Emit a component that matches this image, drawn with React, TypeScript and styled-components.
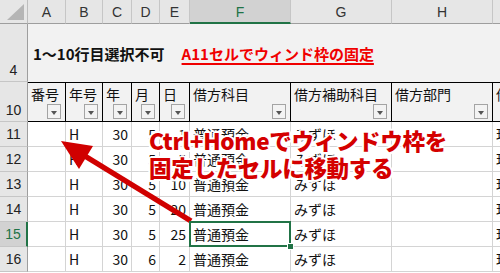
import styled, { createGlobalStyle } from 'styled-components';

const GlobalStyle = createGlobalStyle`
  html, body { margin: 0; padding: 0; background: #fff; }
  body { font-family: "Noto Sans CJK JP", "Noto Sans", sans-serif; }
`;

const GREEN = '#217346';
const GRID = '#d4d4d4';

const Sheet = styled.div`
  position: relative;
  width: 500px;
  height: 273px;
  overflow: hidden;
  display: grid;
  grid-template-columns: 28px 38px 37px 29px 28px 30px 101px 101px 101px 101px;
  grid-template-rows: 24px 58px 40px repeat(6, 25px);
  font-family: "Noto Sans CJK JP", "Noto Sans", sans-serif;
  font-size: 14px;
  color: #111;
  background: #fff;
`;

const Corner = styled.div`
  position: relative;
  background: #e6e6e6;
  border-right: 1px solid #bdbdbd;
  border-bottom: 1px solid #9e9e9e;
  box-sizing: border-box;

  &::after {
    content: '';
    position: absolute;
    right: 3px;
    bottom: 3px;
    width: 0;
    height: 0;
    border-left: 17px solid transparent;
    border-bottom: 16px solid #b5b5b5;
  }
`;

const ColHead = styled.div<{ $active?: boolean }>`
  display: flex;
  align-items: center;
  justify-content: center;
  box-sizing: border-box;
  background: ${(p) => (p.$active ? '#d2d2d2' : '#e6e6e6')};
  color: ${(p) => (p.$active ? GREEN : '#333')};
  border-right: 1px solid #c6c6c6;
  border-bottom: ${(p) => (p.$active ? `2px solid ${GREEN}` : '1px solid #9e9e9e')};
  font-family: "Liberation Sans", "Noto Sans", sans-serif;
  font-size: 14px;
  padding-top: 1px;
`;

const RowHead = styled.div<{ $active?: boolean; $bottom?: boolean }>`
  display: flex;
  align-items: ${(p) => (p.$bottom ? 'flex-end' : 'center')};
  justify-content: center;
  box-sizing: border-box;
  padding-bottom: ${(p) => (p.$bottom ? '3px' : '0')};
  background: ${(p) => (p.$active ? '#d2d2d2' : '#e6e6e6')};
  color: ${(p) => (p.$active ? GREEN : '#222')};
  border-bottom: 1px solid #c6c6c6;
  border-right: ${(p) => (p.$active ? `2px solid ${GREEN}` : '1px solid #9e9e9e')};
  font-family: "Liberation Sans", "Noto Sans", sans-serif;
  font-size: 14px;
`;

const TitleBand = styled.div`
  grid-column: 2 / -1;
  display: flex;
  align-items: center;
  gap: 17px;
  padding-left: 5px;
  background: #f2f2f2;
  font-weight: 700;
  font-size: 15px;
`;

const Title = styled.span`
  color: #111;
`;

const Note = styled.span`
  color: #f00000;
  text-decoration: underline;
  text-underline-offset: 3px;
  text-decoration-thickness: 2px;
`;

const HeadCell = styled.div`
  position: relative;
  box-sizing: border-box;
  background: #f2f2f2;
  border-top: 1px solid #000;
  border-right: 1px solid #000;
  border-bottom: 1px solid #000;
  padding: 2px 0 0 3px;
  white-space: nowrap;
  overflow: hidden;
  line-height: 18px;
`;

const FilterButton = styled.span`
  position: absolute;
  right: 4px;
  bottom: 2px;
  width: 14px;
  height: 15px;
  box-sizing: border-box;
  border: 1px solid #a4a4a4;
  background: #f3f3f3;

  &::after {
    content: '';
    position: absolute;
    left: 3px;
    top: 6px;
    border-left: 3.5px solid transparent;
    border-right: 3.5px solid transparent;
    border-top: 4px solid #555;
  }
`;

const Cell = styled.div<{ $align?: 'left' | 'right'; $selected?: boolean }>`
  position: relative;
  box-sizing: border-box;
  display: flex;
  align-items: center;
  justify-content: ${(p) => (p.$align === 'right' ? 'flex-end' : 'flex-start')};
  padding: 0 3px;
  border-right: 1px solid ${GRID};
  border-bottom: 1px solid ${GRID};
  white-space: nowrap;
  overflow: visible;
  font-size: 14px;

  ${(p) =>
    p.$selected &&
    `
    &::before {
      content: '';
      position: absolute;
      left: -1px;
      top: -1px;
      right: -1px;
      bottom: -1px;
      border: 2px solid ${GREEN};
      z-index: 1;
    }
    &::after {
      content: '';
      position: absolute;
      right: -4px;
      bottom: -4px;
      width: 5px;
      height: 5px;
      background: ${GREEN};
      border: 1px solid #fff;
      z-index: 2;
    }
  `}
`;

const Overlay = styled.svg`
  position: absolute;
  left: 0;
  top: 0;
  pointer-events: none;
`;

const Callout = styled.div`
  position: absolute;
  left: 149px;
  top: 127px;
  color: #d40000;
  font-family: "Noto Sans CJK JP", "Noto Sans", sans-serif;
  font-weight: 900;
  font-size: 22.5px;
  line-height: 27px;
  letter-spacing: -0.3px;
  white-space: nowrap;
  text-shadow:
    2px 0 0 #fff, -2px 0 0 #fff, 0 2px 0 #fff, 0 -2px 0 #fff,
    1.5px 1.5px 0 #fff, -1.5px 1.5px 0 #fff, 1.5px -1.5px 0 #fff, -1.5px -1.5px 0 #fff;
`;

const columns = ['A', 'B', 'C', 'D', 'E', 'F', 'G', 'H', 'I'];
const headers = ['番号', '年号', '年', '月', '日', '借方科目', '借方補助科目', '借方部門', '借方'];

const rows = [
  { n: 11, d: 5, e: 1 },
  { n: 12, d: 5, e: 5 },
  { n: 13, d: 5, e: 10 },
  { n: 14, d: 5, e: 20 },
  { n: 15, d: 5, e: 25 },
  { n: 16, d: 6, e: 2 },
];

export default function App() {
  return (
    <>
      <GlobalStyle />
      <Sheet>
        <Corner />
        {columns.map((c) => (
          <ColHead key={c} $active={c === 'F'}>
            {c}
          </ColHead>
        ))}

        <RowHead $bottom>4</RowHead>
        <TitleBand>
          <Title>1～10行目選択不可</Title>
          <Note>A11セルでウィンド枠の固定</Note>
        </TitleBand>

        <RowHead $bottom>10</RowHead>
        {headers.map((h) => (
          <HeadCell key={h}>
            {h}
            <FilterButton />
          </HeadCell>
        ))}

        {rows.map((r) => (
          <>
            <RowHead key={`h${r.n}`} $active={r.n === 15}>
              {r.n}
            </RowHead>
            <Cell key={`a${r.n}`} />
            <Cell key={`b${r.n}`}>H</Cell>
            <Cell key={`c${r.n}`} $align="right">30</Cell>
            <Cell key={`d${r.n}`} $align="right">{r.d}</Cell>
            <Cell key={`e${r.n}`} $align="right">{r.e}</Cell>
            <Cell key={`f${r.n}`} $selected={r.n === 15}>普通預金</Cell>
            <Cell key={`g${r.n}`}>みずほ</Cell>
            <Cell key={`h2${r.n}`} />
            <Cell key={`i${r.n}`}>現金</Cell>
          </>
        ))}

        <Overlay width="500" height="273" viewBox="0 0 500 273">
          <line x1="80" y1="153" x2="191" y2="221" stroke="#d00000" strokeWidth="5.5" />
          <polygon points="61,141 93,146 79,169" fill="#d00000" />
        </Overlay>
        <Callout>
          Ctrl+Homeでウィンドウ枠を
          <br />
          固定したセルに移動する
        </Callout>
      </Sheet>
    </>
  );
}
